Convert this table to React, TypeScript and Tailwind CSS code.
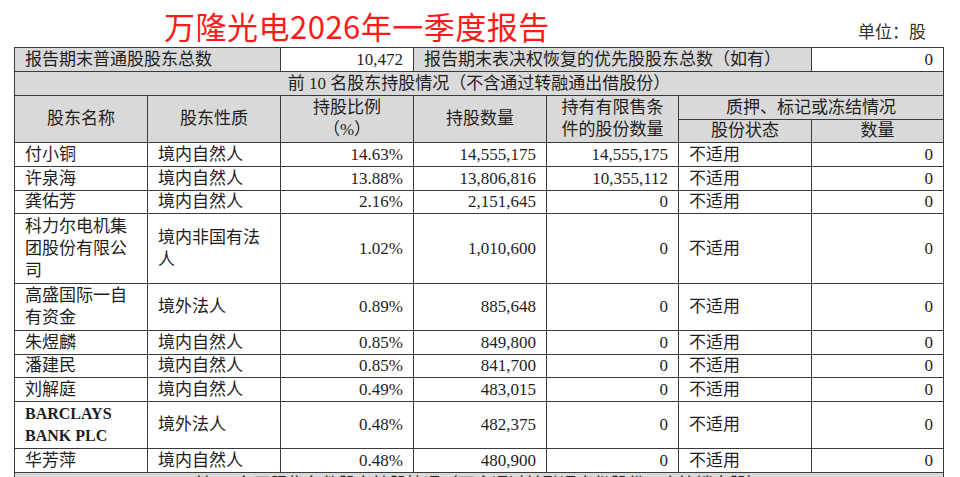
import React from "react";

const serif = "font-['Liberation_Serif','Noto_Sans_CJK_SC',serif]";
const cell = "border border-[#3a3a3a] px-[10px] py-0 align-middle";
const gray = "bg-[#d9d9d9]";

type Row = {
  name: React.ReactNode;
  kind: React.ReactNode;
  pct: string;
  qty: string;
  limited: string;
  h: string;
};

const rows: Row[] = [
  { name: "付小铜", kind: "境内自然人", pct: "14.63%", qty: "14,555,175", limited: "14,555,175", h: "h-[24px]" },
  { name: "许泉海", kind: "境内自然人", pct: "13.88%", qty: "13,806,816", limited: "10,355,112", h: "h-[24px]" },
  { name: "龚佑芳", kind: "境内自然人", pct: "2.16%", qty: "2,151,645", limited: "0", h: "h-[23px]" },
  {
    name: (<span className="leading-[22px]">科力尔电机集<br />团股份有限公<br />司</span>),
    kind: (<>境内非国有法<br />人</>),
    pct: "1.02%", qty: "1,010,600", limited: "0", h: "h-[70px]",
  },
  {
    name: (<>高盛国际一自<br />有资金</>),
    kind: "境外法人",
    pct: "0.89%", qty: "885,648", limited: "0", h: "h-[47px]",
  },
  { name: "朱煜麟", kind: "境内自然人", pct: "0.85%", qty: "849,800", limited: "0", h: "h-[24px]" },
  { name: "潘建民", kind: "境内自然人", pct: "0.85%", qty: "841,700", limited: "0", h: "h-[23px]" },
  { name: "刘解庭", kind: "境内自然人", pct: "0.49%", qty: "483,015", limited: "0", h: "h-[24px]" },
  {
    name: (<span className="font-bold text-[16px]">BARCLAYS<br />BANK PLC</span>),
    kind: "境外法人",
    pct: "0.48%", qty: "482,375", limited: "0", h: "h-[47px]",
  },
  { name: "华芳萍", kind: "境内自然人", pct: "0.48%", qty: "480,900", limited: "0", h: "h-[24px]" },
];

export default function App() {
  return (
    <div className="w-[960px] h-[477px] overflow-hidden bg-white">
      <div className="relative h-[47px]">
        <div className="absolute left-[164px] top-[8px] text-[31px] leading-[36px] text-[#ff1a1a] font-['Noto_Sans_CJK_SC',sans-serif] tracking-[0.5px]">
          万隆光电2026年一季度报告
        </div>
        <div className="absolute left-[858px] top-[21px] text-[17px] leading-[20px] text-[#333] font-['Noto_Sans_CJK_SC',sans-serif]">
          单位：股
        </div>
      </div>
      <table
        className={`ml-[14px] w-[929px] table-fixed border-collapse border border-[#6a6a6a] text-[17px] leading-[22px] text-[#1e1e1e] ${serif}`}
      >
        <colgroup>
          <col className="w-[133px]" />
          <col className="w-[133px]" />
          <col className="w-[133px]" />
          <col className="w-[133px]" />
          <col className="w-[132px]" />
          <col className="w-[133px]" />
          <col className="w-[132px]" />
        </colgroup>
        <tbody>
          <tr className="h-[24px]">
            <td colSpan={2} className={`${cell} ${gray}`}>报告期末普通股股东总数</td>
            <td className={`${cell} text-right`}>10,472</td>
            <td colSpan={3} className={`${cell} ${gray}`}>报告期末表决权恢复的优先股股东总数（如有）</td>
            <td className={`${cell} text-right`}>0</td>
          </tr>
          <tr className="h-[24px]">
            <td colSpan={7} className={`${cell} ${gray} text-center`}>
              前 10 名股东持股情况（不含通过转融通出借股份）
            </td>
          </tr>
          <tr className="h-[24px]">
            <td rowSpan={2} className={`${cell} ${gray} text-center`}>股东名称</td>
            <td rowSpan={2} className={`${cell} ${gray} text-center`}>股东性质</td>
            <td rowSpan={2} className={`${cell} ${gray} text-center`}>持股比例<br />（%）</td>
            <td rowSpan={2} className={`${cell} ${gray} text-center`}>持股数量</td>
            <td rowSpan={2} className={`${cell} ${gray} text-center`}>持有有限售条<br />件的股份数量</td>
            <td colSpan={2} className={`${cell} ${gray} text-center`}>质押、标记或冻结情况</td>
          </tr>
          <tr className="h-[23px]">
            <td className={`${cell} ${gray} text-center`}>股份状态</td>
            <td className={`${cell} ${gray} text-center`}>数量</td>
          </tr>
          {rows.map((r, i) => (
            <tr key={i} className={r.h}>
              <td className={cell}>{r.name}</td>
              <td className={cell}>{r.kind}</td>
              <td className={`${cell} text-right`}>{r.pct}</td>
              <td className={`${cell} text-right`}>{r.qty}</td>
              <td className={`${cell} text-right`}>{r.limited}</td>
              <td className={cell}>不适用</td>
              <td className={`${cell} text-right`}>0</td>
            </tr>
          ))}
          <tr className="h-[24px]">
            <td colSpan={7} className={`${cell} ${gray} text-center`}>
              前 10 名无限售条件股东持股情况（不含通过转融通出借股份、高管锁定股）
            </td>
          </tr>
        </tbody>
      </table>
    </div>
  );
}
